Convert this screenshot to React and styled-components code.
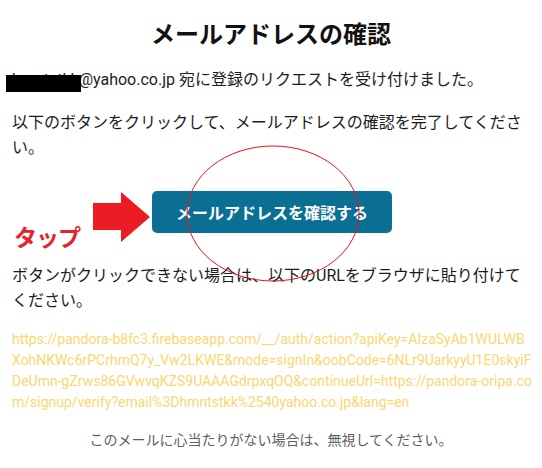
import React from "react";
import styled, { createGlobalStyle } from "styled-components";

const GlobalStyle = createGlobalStyle`
  html, body { margin: 0; padding: 0; background: #ffffff; }
  body {
    font-family: Roboto, "Noto Sans CJK JP", "Noto Sans", sans-serif;
    color: #1a1a1a;
  }
`;

const Page = styled.div`
  position: relative;
  width: 542px;
  height: 468px;
  box-sizing: border-box;
  padding: 17px 12px 0;
  overflow: hidden;
`;

const Title = styled.h1`
  margin: 0;
  font-size: 24px;
  line-height: 32px;
  font-weight: 700;
  text-align: center;
  color: #111;
  font-family: "Noto Sans CJK JP", sans-serif;
`;

const Para = styled.p`
  margin: ${(p) => p.$mt}px 0 0;
  font-size: 16px;
  line-height: 25px;
  color: #1c1c1c;
`;

const Redacted = styled.span`
  position: relative;
  &::after {
    content: "";
    position: absolute;
    left: -6px;
    right: -2px;
    top: 5px;
    height: 17px;
    background: #000;
  }
`;

const ButtonRow = styled.div`
  margin-top: 31px;
  display: flex;
  justify-content: center;
`;

const ConfirmButton = styled.a`
  display: flex;
  align-items: center;
  justify-content: center;
  width: 240px;
  height: 42px;
  border-radius: 5px;
  background: #0b6f94;
  color: #fff;
  font-family: "Noto Sans CJK JP", sans-serif;
  font-weight: 700;
  font-size: 16px;
  text-decoration: none;
  margin-left: 2px;
`;

const Url = styled.p`
  margin: 16px -8px 0 0;
  font-size: 14px;
  line-height: 21px;
  color: #fcd672;
  white-space: nowrap;
`;

const Footer = styled.p`
  margin: 17px 0 0;
  font-size: 14px;
  line-height: 21px;
  color: #5e5e5e;
  text-align: center;
`;

const Arrow = styled.svg`
  position: absolute;
  left: 93px;
  top: 192px;
`;

const TapLabel = styled.span`
  position: absolute;
  left: 14px;
  top: 221px;
  font-family: "Noto Sans CJK JP", sans-serif;
  font-weight: 700;
  font-size: 23px;
  line-height: 30px;
  color: #e4222b;
  letter-spacing: -1px;
`;

const Circle = styled.svg`
  position: absolute;
  left: 184px;
  top: 143px;
  pointer-events: none;
`;

export default function App() {
  return (
    <>
      <GlobalStyle />
      <Page>
        <Title>メールアドレスの確認</Title>
        <Para $mt={18}>
          <Redacted>hmntstkk</Redacted>@yahoo.co.jp 宛に登録のリクエストを受け付けました。
        </Para>
        <Para $mt={18}>
          以下のボタンをクリックして、メールアドレスの確認を完了してください。
        </Para>
        <ButtonRow>
          <ConfirmButton href="#">メールアドレスを確認する</ConfirmButton>
        </ButtonRow>
        <Para $mt={30}>
          ボタンがクリックできない場合は、以下のURLをブラウザに貼り付けてください。
        </Para>
        <Url>
          https://pandora-b8fc3.firebaseapp.com/__/auth/action?apiKey=AIzaSyAb1WULWB
          <br />
          XohNKWc6rPCrhmQ7y_Vw2LKWE&amp;mode=signIn&amp;oobCode=6NLr9UarkyyU1E0skyiF
          <br />
          DeUmn-gZrws86GVwvqKZS9UAAAGdrpxqOQ&amp;continueUrl=https://pandora-oripa.co
          <br />
          m/signup/verify?email%3Dhmntstkk%2540yahoo.co.jp&amp;lang=en
        </Url>
        <Footer>このメールに心当たりがない場合は、無視してください。</Footer>

        <Arrow width="58" height="51" viewBox="0 0 58 51">
          <polygon points="0,11 28,11 28,0 57,25 28,50 28,38 0,38" fill="#ec1c24" />
        </Arrow>
        <TapLabel>タップ</TapLabel>
        <Circle width="180" height="142" viewBox="0 0 180 142">
          <ellipse cx="89" cy="70.5" rx="86" ry="67.5" fill="none" stroke="#e3141c" strokeWidth="1" />
        </Circle>
      </Page>
    </>
  );
}
